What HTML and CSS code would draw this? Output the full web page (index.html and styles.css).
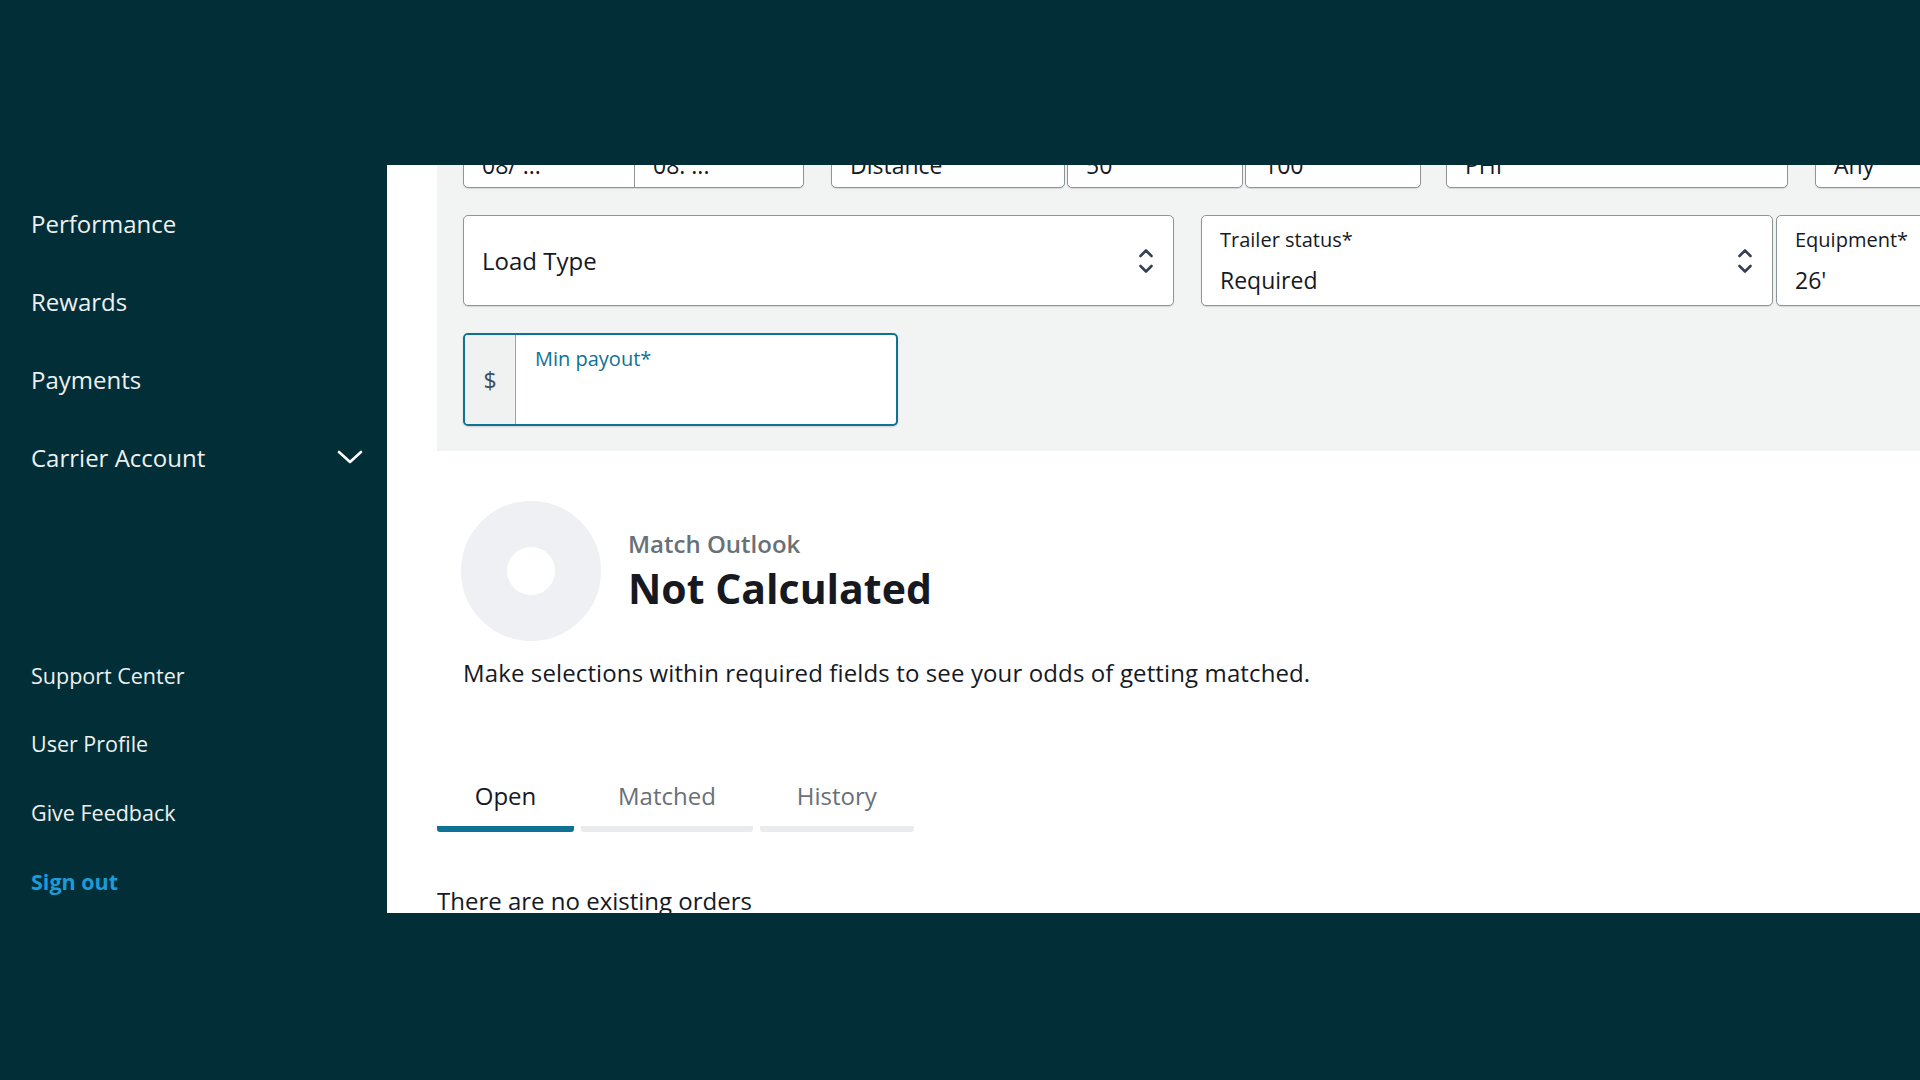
FILE: index.html
```html
<!DOCTYPE html>
<html lang="en">

<head>
    <title>Load Board</title>
    <link rel="stylesheet" href="styles.css">
</head>

<body>
    <div class="app">
        <nav class="sidebar">
            <ul class="nav-main">
                <li class="nav-item">Performance</li>
                <li class="nav-item">Rewards</li>
                <li class="nav-item">Payments</li>
                <li class="nav-item nav-group">
                    <span>Carrier Account</span>
                    <svg class="nav-chevron" width="26" height="14" viewBox="0 0 26 14">
                        <path d="M2 2 L13 12 L24 2" fill="none" stroke="#ffffff" stroke-width="2.6" stroke-linecap="round" stroke-linejoin="round" />
                    </svg>
                </li>
            </ul>

            <ul class="nav-foot">
                <li class="foot-item">Support Center</li>
                <li class="foot-item">User Profile</li>
                <li class="foot-item">Give Feedback</li>
                <li class="foot-item sign-out">Sign out</li>
            </ul>
        </nav>

        <div class="stage">
            <main class="panel">
                <!-- search filters, scrolled so the first row is cut off -->
                <section class="filters">
                    <div class="filter-row row-top">
                        <div class="field range">
                            <div class="range-half">
                                <span class="field-label">Start date</span>
                                <span class="field-value">08/ ...</span>
                            </div>
                            <div class="range-half range-end">
                                <span class="field-label">End date</span>
                                <span class="field-value">08: ...</span>
                            </div>
                        </div>

                        <div class="dist-group">
                            <div class="field stacked w-distance">
                                <span class="field-label">Radius</span>
                                <span class="field-value">Distance</span>
                            </div>
                            <div class="field stacked w-small">
                                <span class="field-label">Min</span>
                                <span class="field-value">50</span>
                            </div>
                            <div class="field stacked w-small">
                                <span class="field-label">Max</span>
                                <span class="field-value">100</span>
                            </div>
                        </div>

                        <div class="field stacked w-city">
                            <span class="field-label">Destination</span>
                            <span class="field-value">PHI</span>
                        </div>

                        <div class="field stacked w-any">
                            <span class="field-label">Stops</span>
                            <span class="field-value">Any</span>
                        </div>
                    </div>

                    <div class="filter-row">
                        <div class="field select w-load">
                            <span class="placeholder">Load Type</span>
                            <svg class="updown" width="16" height="26" viewBox="0 0 16 26">
                                <path d="M2.5 8 L8 2.5 L13.5 8 M2.5 18 L8 23.5 L13.5 18" fill="none" stroke="#354150" stroke-width="2.6" stroke-linecap="round" stroke-linejoin="round" />
                            </svg>
                        </div>

                        <div class="field select w-trailer">
                            <div class="stack">
                                <span class="field-label">Trailer status*</span>
                                <span class="field-value">Required</span>
                            </div>
                            <svg class="updown" width="16" height="26" viewBox="0 0 16 26">
                                <path d="M2.5 8 L8 2.5 L13.5 8 M2.5 18 L8 23.5 L13.5 18" fill="none" stroke="#354150" stroke-width="2.6" stroke-linecap="round" stroke-linejoin="round" />
                            </svg>
                        </div>

                        <div class="field stacked w-equipment">
                            <span class="field-label">Equipment*</span>
                            <span class="field-value">26'</span>
                        </div>
                    </div>

                    <div class="filter-row">
                        <div class="payout">
                            <span class="payout-unit">$</span>
                            <span class="payout-label">Min payout*</span>
                        </div>
                    </div>
                </section>

                <section class="outlook">
                    <div class="outlook-head">
                        <div class="donut"></div>
                        <div>
                            <p class="outlook-title">Match Outlook</p>
                            <p class="outlook-value">Not Calculated</p>
                        </div>
                    </div>
                    <p class="outlook-note">Make selections within required fields to see your odds of getting matched.</p>
                </section>

                <div class="tabs">
                    <div class="tab tab-open active">Open</div>
                    <div class="tab">Matched</div>
                    <div class="tab">History</div>
                </div>

                <p class="empty">There are no existing orders</p>
            </main>
        </div>
    </div>
</body>

</html>
```

FILE: styles.css
```css
/* page frame */
body {
    margin: 0;
    background-color: #022f37;
    font-family: "Open Sans", "Noto Sans", sans-serif;
    color: #16191f;
    width: 1920px;
    height: 1080px;
    overflow: hidden;
}

p {
    margin: 0;
}

.app {
    display: flex;
    height: 1080px;
}

/* left navigation */
.sidebar {
    width: 387px;
    flex-shrink: 0;
    padding: 184px 24px 0 31px;
    box-sizing: border-box;
    color: #eef0f0;
}

.sidebar ul {
    list-style: none;
    margin: 0;
    padding: 0;
}

.nav-item {
    height: 78px;
    display: flex;
    align-items: center;
    font-size: 24px;
}

.nav-group {
    justify-content: space-between;
}

.nav-foot {
    margin-top: 145px !important;
}

.foot-item {
    height: 68.6px;
    display: flex;
    align-items: center;
    font-size: 21.5px;
    font-weight: 500;
}

.sign-out {
    color: #1c9bd8;
    font-weight: 700;
}

/* main area */
.stage {
    flex: 1;
    padding-top: 165px;
    min-width: 0;
}

.panel {
    background-color: #ffffff;
    height: 748px;
    overflow: hidden;
    padding-left: 50px;
}

.filters {
    background-color: #f2f3f3;
    margin-top: -93px;
    padding: 25px 0 25px 26px;
    display: flex;
    flex-direction: column;
    gap: 27px;
}

.filter-row {
    display: flex;
    align-items: flex-start;
}

.field {
    flex-shrink: 0;
    height: 91px;
    box-sizing: border-box;
    background-color: #ffffff;
    border: 1px solid #8d9599;
    border-radius: 5px;
    box-shadow: 0 1px 1px rgba(0, 0, 0, 0.12);
}

.stacked,
.range-half,
.stack {
    display: flex;
    flex-direction: column;
}

.stacked,
.range-half {
    padding: 12px 18px 0;
    box-sizing: border-box;
}

.field-label {
    font-size: 20px;
    line-height: 24px;
    color: #16191f;
}

.field-value {
    font-size: 23px;
    line-height: 30px;
    margin-top: 13px;
    color: #16191f;
}

.row-top .field-value {
    margin-top: 16px;
}

.range {
    width: 341px;
    display: flex;
}

.range-half {
    width: 170px;
}

.range-end {
    flex: 1;
    border-left: 1px solid #8d9599;
}

.dist-group {
    display: flex;
    gap: 2px;
    margin-left: 27px;
}

.w-distance {
    width: 234px;
}

.w-small {
    width: 176px;
}

.w-city {
    width: 342px;
    margin-left: 25px;
}

.w-any {
    width: 300px;
    margin-left: 27px;
}

.select {
    display: flex;
    align-items: center;
    padding: 0 19px 0 18px;
}

.select .stack {
    align-self: flex-start;
    padding-top: 12px;
}

.updown {
    margin-left: auto;
    flex-shrink: 0;
}

.placeholder {
    font-size: 24px;
    color: #16191f;
}

.w-load {
    width: 711px;
}

.w-trailer {
    width: 572px;
    margin-left: 27px;
}

.w-equipment {
    width: 300px;
    margin-left: 3px;
}

/* min payout input, focused */
.payout {
    width: 435px;
    height: 93px;
    box-sizing: border-box;
    border: 2px solid #0f7194;
    border-radius: 5px;
    background-color: #ffffff;
    display: flex;
    overflow: hidden;
    box-shadow: 0 1px 2px rgba(0, 0, 0, 0.15);
}

.payout-unit {
    width: 50px;
    flex-shrink: 0;
    background-color: #f0f1f1;
    border-right: 1px solid #9aa2a6;
    display: flex;
    align-items: center;
    justify-content: center;
    font-size: 23px;
    color: #414d5c;
}

.payout-label {
    padding: 10px 0 0 19px;
    font-size: 20px;
    line-height: 28px;
    color: #0f7194;
}

/* match outlook */
.outlook {
    padding: 50px 0 0 24px;
}

.outlook-head {
    display: flex;
    align-items: center;
    gap: 27px;
}

.donut {
    width: 140px;
    height: 140px;
    box-sizing: border-box;
    border-radius: 50%;
    border: 46px solid #eef0f3;
}

.outlook-title {
    font-size: 24px;
    font-weight: 600;
    line-height: 30px;
    color: #687078;
}

.outlook-value {
    font-size: 41px;
    font-weight: 700;
    line-height: 52px;
    margin-top: 3px;
    color: #16191f;
}

.outlook-note {
    margin: 16px 0 0 2px;
    font-size: 24px;
    line-height: 32px;
    letter-spacing: 0.12px;
}

/* tabs */
.tabs {
    display: flex;
    gap: 7px;
    margin-top: 91px;
}

.tab {
    padding: 0 37px 14px;
    font-size: 24px;
    line-height: 32px;
    color: #687078;
    text-align: center;
    border-bottom: 6px solid #e9ebed;
    border-radius: 0 0 3px 3px;
}

.tab-open {
    min-width: 137px;
    box-sizing: border-box;
    padding: 0 0 14px;
}

.tab.active {
    color: #16191f;
    border-bottom-color: #0f7194;
}

.empty {
    margin-top: 53px;
    font-size: 24px;
    line-height: 32px;
}
```
